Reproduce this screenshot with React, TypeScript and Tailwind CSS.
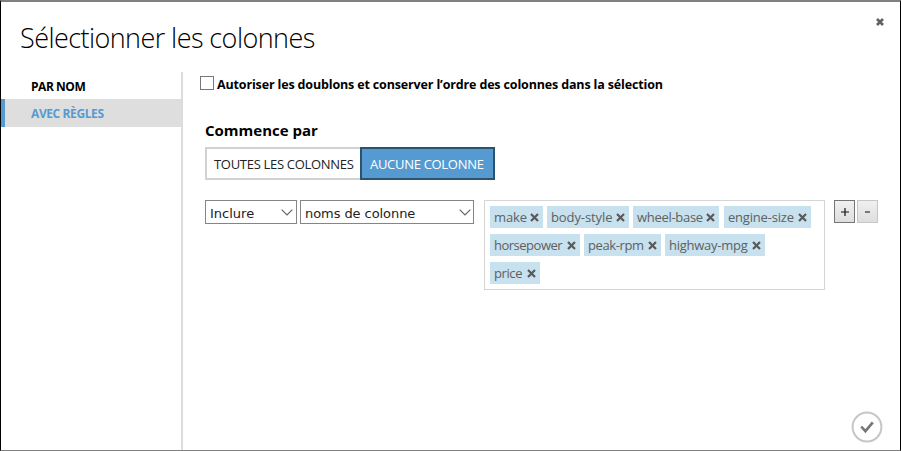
import React from "react";

type Tag = { label: string; box: string; text: string };

const rows: Tag[][] = [
  [
    { label: "make", box: "w-[53px]", text: "tracking-[-0.1px]" },
    { label: "body-style", box: "w-[82px] ml-1", text: "tracking-[-0.1px]" },
    { label: "wheel-base", box: "w-[86px] ml-1", text: "tracking-[-0.3px]" },
    { label: "engine-size", box: "w-[87px] ml-[5px]", text: "tracking-[-0.2px]" },
  ],
  [
    { label: "horsepower", box: "w-[90px]", text: "tracking-[-0.5px]" },
    { label: "peak-rpm", box: "w-[77px] ml-1", text: "tracking-[-0.4px]" },
    { label: "highway-mpg", box: "w-[100px] ml-1", text: "tracking-[-0.25px]" },
  ],
  [{ label: "price", box: "w-[50px]", text: "tracking-[-0.4px]" }],
];

function Cross() {
  return (
    <svg width="9" height="9" viewBox="0 0 9 9" className="shrink-0">
      <path d="M1 1 L8 8 M8 1 L1 8" stroke="#595959" strokeWidth="2.2" />
    </svg>
  );
}

function Chevron() {
  return (
    <svg width="12" height="7" viewBox="0 0 12 7" fill="none" className="shrink-0">
      <path d="M0.7 0.7 L6 6 L11.3 0.7" stroke="#606060" strokeWidth="1.1" />
    </svg>
  );
}

export default function App() {
  return (
    <div className="flex h-[451px] w-[901px] flex-col overflow-hidden border-x border-t-2 border-b border-x-black border-t-[#808080] border-b-[#808080] bg-white font-['Open_Sans','Noto_Sans',sans-serif] text-black">
      <header className="flex h-[70px] shrink-0 justify-between">
        <h1 className="ml-[19px] mt-[17px] whitespace-nowrap text-[27px] font-light leading-[38px] tracking-[-0.57px]">
          Sélectionner les colonnes
        </h1>
        <svg width="8" height="8" viewBox="0 0 8 8" className="mr-[16px] mt-[16px]">
          <path d="M1 1 L7 7 M7 1 L1 7" stroke="#606060" strokeWidth="2.6" />
        </svg>
      </header>
      <div className="flex min-h-0 flex-1">
        <nav className="w-[182px] shrink-0 border-r-2 border-[#dcdcdc] text-[12px] font-bold">
          <div className="flex h-[27px] items-center pl-[30px] pt-[2px]">
            <span className="tracking-[-0.45px]">PAR NOM</span>
          </div>
          <div className="flex h-7 items-center border-l-4 border-[#559bd1] bg-[#dedede] pl-[26px] pt-[2px] text-[#559bd1]">
            <span className="tracking-[-0.4px]">AVEC RÈGLES</span>
          </div>
        </nav>
        <main className="min-w-0 flex-1 whitespace-nowrap">
          <label className="ml-[17px] mt-[3px] flex h-[16px] items-center">
            <span className="h-[14px] w-[14px] border border-[#777] bg-white" />
            <span className="ml-[3px] pt-[4px] text-[12.5px] font-bold tracking-[-0.15px]">
              Autoriser les doublons et conserver l’ordre des colonnes dans la sélection
            </span>
          </label>
          <h2 className="ml-[22px] mt-[29px] text-[15px] font-bold leading-[20px]">Commence par</h2>
          <div className="ml-[22px] mt-[7px] flex h-[33px] text-[13px]">
            <div className="flex w-[155px] items-center border-2 border-r-0 border-[#d2d2d2] pl-[7px] pt-[2px] text-[#222]">
              <span className="tracking-[-0.3px]">TOUTES LES COLONNES</span>
            </div>
            <div className="flex w-[135px] items-center border-2 border-[#2c526e] bg-[#559bd1] pl-[8px] pt-[2px] text-white">
              <span className="tracking-[-0.3px]">AUCUNE COLONNE</span>
            </div>
          </div>
          <div className="ml-[22px] mt-[20px] flex items-start">
            <div className="flex h-6 w-[92px] items-center justify-between border border-[#858585] pl-[4px] pr-[3px] font-['DejaVu_Sans'] text-[13px] text-[#222]">
              <span className="pt-[3px]">Inclure</span>
              <Chevron />
            </div>
            <div className="ml-[3px] flex h-6 w-[174px] items-center justify-between border border-[#858585] pl-[4px] pr-[2px] font-['DejaVu_Sans'] text-[13px] text-[#222]">
              <span className="pt-[3px] tracking-[-0.07px]">noms de colonne</span>
              <Chevron />
            </div>
            <div className="ml-[10px] flex h-[90px] w-[341px] flex-col gap-[6px] border border-[#d5d5d5] pl-[5px] pt-[5px]">
              {rows.map((row, i) => (
                <div key={i} className="flex h-[22px]">
                  {row.map((tag) => (
                    <div
                      key={tag.label}
                      className={`flex shrink-0 items-center justify-between bg-[#c7e1ee] pl-[4px] pr-[4px] text-[13px] text-[#606060] ${tag.box}`}
                    >
                      <span className={`pt-[2px] ${tag.text}`}>{tag.label}</span>
                      <Cross />
                    </div>
                  ))}
                </div>
              ))}
            </div>
            <button className="ml-[9px] flex h-[23px] w-[21px] items-center justify-center border border-[#757575] bg-linear-to-b from-[#f0f0f0] to-[#dedede]">
              <svg width="8" height="8" viewBox="0 0 8 8">
                <path d="M4 0 V8 M0 4 H8" stroke="#111" strokeWidth="1.2" />
              </svg>
            </button>
            <button className="ml-[2px] flex h-[23px] w-[21px] items-center justify-center border border-[#c6c6c6] bg-linear-to-b from-[#f0f0f0] to-[#dedede]">
              <span className="h-[2px] w-[5px] bg-[#777]" />
            </button>
          </div>
          <div className="mt-[121px] flex justify-end pr-[17px]">
            <svg width="32" height="32" viewBox="0 0 32 32" fill="none">
              <circle cx="16" cy="16" r="14.4" stroke="#c6c6c6" strokeWidth="2" />
              <path d="M10.2 15.5 L14.4 20.2 L21.8 11.3" stroke="#777" strokeWidth="2.6" />
            </svg>
          </div>
        </main>
      </div>
    </div>
  );
}
